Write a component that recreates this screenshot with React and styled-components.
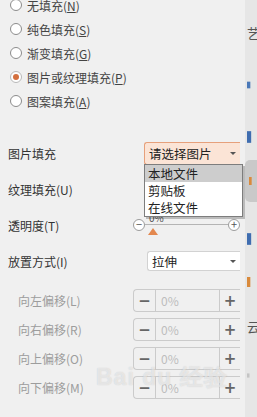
import styled, { createGlobalStyle } from 'styled-components';

const Global = createGlobalStyle`
  html, body { margin: 0; padding: 0; background: #f0f0f0; }
  body {
    width: 257px;
    height: 417px;
    overflow: hidden;
    font-family: "Noto Sans CJK SC", "Noto Sans", sans-serif;
    font-size: 12px;
  }
`;

const Page = styled.div`
  display: flex;
  width: 257px;
  height: 417px;
  overflow: hidden;
  position: relative;
  background: #f0f0f0;
`;

const Main = styled.div`
  width: 240px;
  flex: none;
  padding-left: 8px;
  box-sizing: border-box;
  margin-right: 5px;
`;

const RadioList = styled.div`
  display: flex;
  flex-direction: column;
  margin-top: -7px;
`;

const RadioRow = styled.div`
  display: flex;
  align-items: center;
  gap: 5px;
  height: 24px;
  color: #444;
`;

const RadioDot = styled.span`
  width: 12px;
  height: 12px;
  margin-left: 2px;
  box-sizing: border-box;
  border-radius: 50%;
  border: 1px solid ${p => (p.$on ? '#b9b9b9' : '#8c8c8c')};
  background: #fff;
  display: flex;
  align-items: center;
  justify-content: center;
  &::after {
    content: '';
    display: ${p => (p.$on ? 'block' : 'none')};
    width: 6px;
    height: 6px;
    border-radius: 50%;
    background: #d4703f;
  }
`;

const Key = styled.span`
  text-decoration: underline;
  text-underline-offset: 1px;
`;

const Form = styled.div`
  display: flex;
  flex-direction: column;
  gap: 12px;
  margin-top: 28px;
`;

const FieldRow = styled.div`
  display: grid;
  grid-template-columns: 136px 96px;
  align-items: center;
  height: 24px;
  color: #333;
`;

const Control = styled.div`
  position: relative;
  height: 100%;
  display: flex;
  align-items: center;
`;

const Select = styled.div`
  position: relative;
  display: flex;
  align-items: center;
  box-sizing: border-box;
  width: ${p => p.$w}px;
  height: ${p => p.$h}px;
  margin-left: ${p => p.$ml || 0}px;
  padding-left: 4px;
  border: 1px solid ${p => (p.$active ? '#e6a07b' : '#d2d2d2')};
  border-right: none;
  border-radius: 3px 0 0 3px;
  background: ${p => (p.$active ? '#fbe4d6' : '#fff')};
  color: #222;
  font-size: 12.5px;
`;

const Caret = styled.span`
  position: absolute;
  right: 4px;
  top: 50%;
  margin-top: -1px;
  border-left: 3px solid transparent;
  border-right: 3px solid transparent;
  border-top: 3px solid #555;
`;

const Menu = styled.div`
  position: absolute;
  top: 23px;
  left: 0;
  width: 99px;
  box-sizing: border-box;
  background: #fff;
  border: 1px solid #7d7d7d;
  box-shadow: 2px 2px 0 rgba(0, 0, 0, 0.22);
  z-index: 5;
`;

const MenuItem = styled.div`
  height: 17px;
  line-height: 17px;
  padding-left: 3px;
  color: #222;
  font-size: 12.5px;
  background: ${p => (p.$hover ? '#cdcdcd' : 'transparent')};
`;

const Slider = styled.div`
  display: flex;
  align-items: center;
  margin-left: -11px;
  width: 108px;
  height: 100%;
`;

const RoundBtn = styled.span`
  flex: none;
  width: 12px;
  height: 12px;
  box-sizing: border-box;
  border: 1px solid #9c9c9c;
  border-radius: 50%;
  background: #fff;
  color: #555;
  font-size: 11px;
  line-height: 9px;
  text-align: center;
`;

const Track = styled.div`
  position: relative;
  flex: 1;
  height: 1px;
  background: #b4b4b4;
  margin-top: -1px;
`;

const Thumb = styled.span`
  position: absolute;
  left: 3px;
  top: 4px;
  border-left: 5px solid transparent;
  border-right: 5px solid transparent;
  border-bottom: 7px solid #e3884f;
`;

const Percent = styled.span`
  position: absolute;
  left: 4px;
  top: -14px;
  font-size: 10px;
  color: #555;
`;

const OffsetList = styled.div`
  display: flex;
  flex-direction: column;
  gap: 6px;
  margin-top: 16px;
  padding-left: 10px;
`;

const OffsetRow = styled.div`
  display: grid;
  grid-template-columns: 115px 107px;
  align-items: center;
  height: 23px;
  color: #9d9d9d;
`;

const Spinner = styled.div`
  display: flex;
  height: 23px;
  box-sizing: border-box;
  border: 1px solid #cbcbcb;
  border-right: none;
  border-radius: 4px 0 0 4px;
`;

const SpinBtn = styled.span`
  flex: none;
  width: ${p => p.$w}px;
  display: flex;
  align-items: center;
  justify-content: center;
  color: #666;
  font-size: 15px;
  font-weight: bold;
  font-family: "DejaVu Sans", sans-serif;
  border-left: ${p => (p.$side === 'right' ? '1px solid #cbcbcb' : 'none')};
  border-right: ${p => (p.$side === 'left' ? '1px solid #cbcbcb' : 'none')};
`;

const SpinValue = styled.span`
  flex: 1;
  display: flex;
  align-items: center;
  padding-left: 5px;
  color: #bdbdbd;
`;

const Side = styled.div`
  width: 12px;
  flex: none;
  background: #e6e6e6;
  display: flex;
  flex-direction: column;
  overflow: hidden;
`;

const SideItem = styled.div`
  margin-top: ${p => p.$gap}px;
  height: ${p => p.$h || 16}px;
  display: flex;
  align-items: center;
  padding-left: ${p => p.$pl ?? 2}px;
  color: #555;
  font-size: 13px;
  white-space: nowrap;
  border-radius: ${p => (p.$sel ? '5px 0 0 5px' : '0')};
  background: ${p => (p.$sel ? '#c9c9c9' : 'transparent')};
`;

const Watermark = styled.div`
  position: absolute;
  left: 96px;
  top: 362px;
  font-family: "Liberation Sans", sans-serif;
  font-size: 23px;
  font-weight: bold;
  color: rgba(255, 255, 255, 0.55);
  text-shadow: 0 0 1px rgba(120, 120, 120, 0.35);
  letter-spacing: 1px;
  pointer-events: none;
`;

const radios = [
  { text: '无填充', key: 'N' },
  { text: '纯色填充', key: 'S' },
  { text: '渐变填充', key: 'G' },
  { text: '图片或纹理填充', key: 'P', on: true },
  { text: '图案填充', key: 'A' },
];

const offsets = ['向左偏移(L)', '向右偏移(R)', '向上偏移(O)', '向下偏移(M)'];

const Icon = ({ color, w = 5, h = 10 }) => (
  <svg width="12" height={h} viewBox={`0 0 12 ${h}`}>
    <rect x="0" y="0" width={w} height={h} fill={color} />
  </svg>
);

export default function App() {
  return (
    <>
      <Global />
      <Page>
        <Main>
          <RadioList>
            {radios.map(r => (
              <RadioRow key={r.key}>
                <RadioDot $on={r.on} />
                <span>
                  {r.text}(<Key>{r.key}</Key>)
                </span>
              </RadioRow>
            ))}
          </RadioList>

          <Form>
            <FieldRow>
              <span>图片填充</span>
              <Control>
                <Select $w={96} $h={23} $active>
                  请选择图片
                  <Caret />
                </Select>
                <Menu>
                  <MenuItem $hover>本地文件</MenuItem>
                  <MenuItem>剪贴板</MenuItem>
                  <MenuItem>在线文件</MenuItem>
                </Menu>
              </Control>
            </FieldRow>
            <FieldRow>
              <span>纹理填充(U)</span>
              <Control />
            </FieldRow>
            <FieldRow>
              <span>透明度(T)</span>
              <Control>
                <Slider>
                  <RoundBtn>−</RoundBtn>
                  <Track>
                    <Percent>0%</Percent>
                    <Thumb />
                  </Track>
                  <RoundBtn>+</RoundBtn>
                </Slider>
              </Control>
            </FieldRow>
            <FieldRow>
              <span>放置方式(I)</span>
              <Control>
                <Select $w={93} $h={20} $ml={3}>
                  拉伸
                  <Caret />
                </Select>
              </Control>
            </FieldRow>
          </Form>

          <OffsetList>
            {offsets.map(o => (
              <OffsetRow key={o}>
                <span>{o}</span>
                <Spinner>
                  <SpinBtn $w={21} $side="left">−</SpinBtn>
                  <SpinValue>0%</SpinValue>
                  <SpinBtn $w={20} $side="right">+</SpinBtn>
                </Spinner>
              </OffsetRow>
            ))}
          </OffsetList>
        </Main>

        <Side>
          <SideItem $gap={24}>艺</SideItem>
          <SideItem $gap={40} $h={10}><Icon color="#4a78b8" w={4} h={8} /></SideItem>
          <SideItem $gap={40} $h={14}><Icon color="#3f6db0" w={5} h={14} /></SideItem>
          <SideItem $gap={16} $h={42} $sel $pl={4}><Icon color="#d98a3c" w={4} h={12} /></SideItem>
          <SideItem $gap={30} $h={14}><Icon color="#3f6db0" w={5} h={14} /></SideItem>
          <SideItem $gap={30} $h={12}><Icon color="#d98a3c" w={4} h={12} /></SideItem>
          <SideItem $gap={30}>云</SideItem>
          <SideItem $gap={38} $h={6}><Icon color="#c4c4c4" w={3} h={5} /></SideItem>
        </Side>

        <Watermark>Bai du 经验</Watermark>
      </Page>
    </>
  );
}
